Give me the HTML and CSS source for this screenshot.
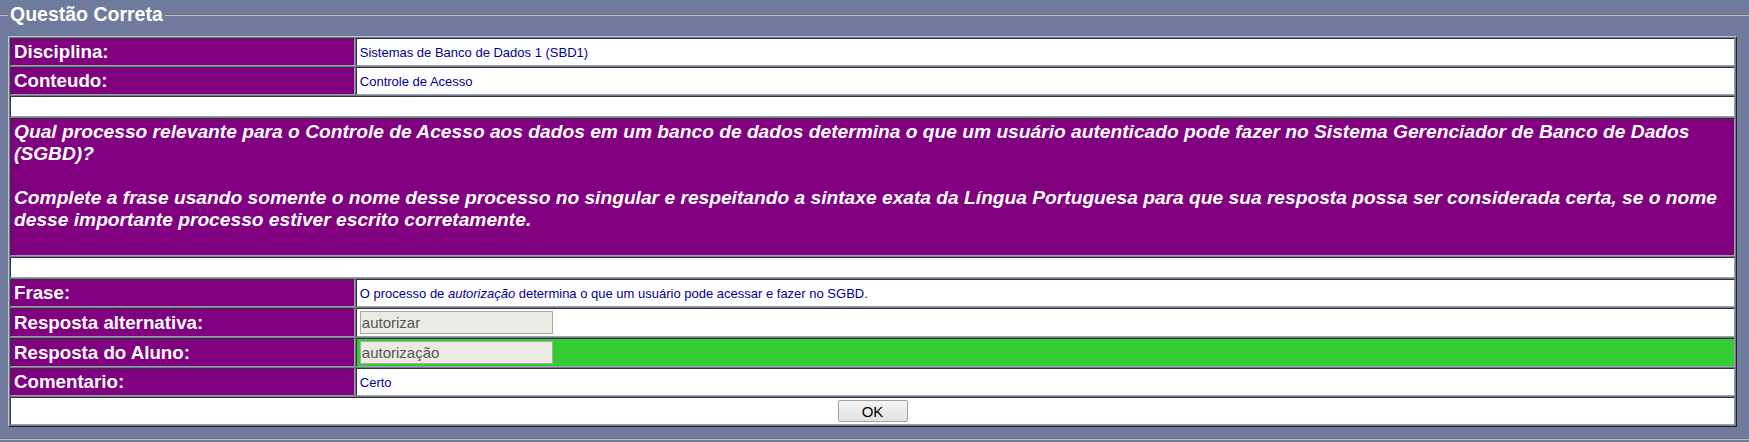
FILE: index.html
```html
<!DOCTYPE html>
<html lang="pt">
<head>
<meta charset="utf-8">
<title>Questão Correta</title>
<link rel="stylesheet" href="styles.css">
</head>
<body>
<fieldset class="box">
  <legend class="box-title">Questão Correta</legend>
  <table class="qtable">
    <tr>
      <td class="lbl">Disciplina:</td>
      <td class="val">Sistemas de Banco de Dados 1 (SBD1)</td>
    </tr>
    <tr>
      <td class="lbl">Conteudo:</td>
      <td class="val">Controle de Acesso</td>
    </tr>
    <tr>
      <td class="blank" colspan="2">&nbsp;</td>
    </tr>
    <tr>
      <td class="question" colspan="2">Qual processo relevante para o Controle de Acesso aos dados em um banco de dados determina o que um usuário autenticado pode fazer no Sistema Gerenciador de Banco de Dados (SGBD)?<br><br>Complete a frase usando somente o nome desse processo no singular e respeitando a sintaxe exata da Língua Portuguesa para que sua resposta possa ser considerada certa, se o nome desse importante processo estiver escrito corretamente.<br><br></td>
    </tr>
    <tr>
      <td class="blank" colspan="2">&nbsp;</td>
    </tr>
    <tr>
      <td class="lbl">Frase:</td>
      <td class="val">O processo de <i>autorização</i> determina o que um usuário pode acessar e fazer no SGBD.</td>
    </tr>
    <tr>
      <td class="lbl">Resposta alternativa:</td>
      <td class="val"><input class="field" type="text" value="autorizar" readonly></td>
    </tr>
    <tr>
      <td class="lbl">Resposta do Aluno:</td>
      <td class="val correct"><input class="field" type="text" value="autorização" readonly></td>
    </tr>
    <tr>
      <td class="lbl">Comentario:</td>
      <td class="val">Certo</td>
    </tr>
    <tr>
      <td class="actions" colspan="2"><button class="ok" type="button">OK</button></td>
    </tr>
  </table>
</fieldset>
</body>
</html>
```
FILE: styles.css
```css
html, body {
  margin: 0;
  padding: 0;
}
body {
  background: #6f7a9d;
  overflow: hidden;
  font-family: "Liberation Sans", Arial, sans-serif;
}
.box {
  margin: 3px -20px 0 -20px;
  padding: 10px 30px 11px 26px;
  border: 2px groove #c0c0c0;
  min-width: 0;
}
.box-title {
  padding: 0 2px;
  color: #ffffff;
  font-weight: bold;
  font-size: 19.5px;
}
.qtable {
  width: 100%;
  border-collapse: separate;
  border-spacing: 1px;
  border: 1px solid;
  border-color: #c4c4c4 #222222 #222222 #c4c4c4;
  background: transparent;
}
.qtable td {
  border: 1px solid;
  border-color: #333333 #a0a0a0 #a0a0a0 #333333;
  padding: 2px 3px;
  background: #ffffff;
}
.qtable td.lbl {
  width: 20%;
  background: #800080;
  color: #ffffff;
  font-weight: bold;
  font-size: 18.72px;
}
.qtable td.val {
  color: #000099;
  font-size: 13px;
}
.qtable td.correct {
  background: #33cc33;
}
.qtable td.blank {
  font-size: 16px;
  padding: 1px 3px 0;
}
.qtable td.question {
  background: #800080;
  color: #ffffff;
  font-weight: bold;
  font-style: italic;
  font-size: 19.2px;
}
.field {
  display: block;
  box-sizing: border-box;
  width: 193px;
  height: 23px;
  margin: 0;
  padding: 0 1px;
  border: 1px solid #a8a8a8;
  background: #ebebe4;
  color: #545454;
  font-family: "Liberation Sans", Arial, sans-serif;
  font-size: 15px;
}
.qtable td.actions {
  text-align: center;
  padding: 2px 3px;
}
.ok {
  box-sizing: border-box;
  width: 70px;
  height: 22px;
  margin: 0;
  padding: 0;
  border: 1px solid #a0a0a0;
  border-radius: 2px;
  background: linear-gradient(#f4f4f4, #e2e2e2);
  color: #000000;
  font-family: "Liberation Sans", Arial, sans-serif;
  font-size: 15px;
  vertical-align: middle;
}
```
